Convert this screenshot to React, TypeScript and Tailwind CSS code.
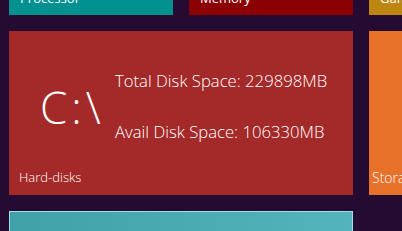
import React from "react";

export default function App() {
  const font = { fontFamily: '"Open Sans", "Noto Sans", sans-serif' };
  return (
    <div className="w-[402px] h-[231px] overflow-hidden bg-[#250a31] text-white" style={font}>
      <div className="grid grid-cols-[164px_164px_164px] grid-rows-[164px_164px_164px] gap-4 pl-[9px] -mt-[149px]">
        <div className="bg-[#009090] flex items-end px-[11px] pb-[10px] overflow-hidden">
          <span className="text-[13px] leading-none">Processor</span>
        </div>
        <div className="bg-[#8b0000] flex items-end px-[11px] pb-[10px] overflow-hidden">
          <span className="text-[13px] leading-none">Memory</span>
        </div>
        <div className="bg-[#bd8610] flex items-end px-[11px] pb-[10px] overflow-hidden">
          <span className="text-[13px] leading-none">Games</span>
        </div>

        <div className="col-span-2 bg-[#a42a2a] flex flex-col">
          <div className="flex-1 flex items-center pl-[31px] pt-[12px]">
            <div className="text-[44px] font-light leading-none tracking-[4px] w-[75px]">C:\</div>
            <div className="flex flex-col gap-[34px] text-[16.7px] leading-none font-light">
              <span>Total Disk Space: 229898MB</span>
              <span>Avail Disk Space: 106330MB</span>
            </div>
          </div>
          <div className="px-[10px] pb-[11px] text-[13px] leading-none font-light">Hard-disks</div>
        </div>
        <div className="bg-[#e8712a] flex flex-col justify-end px-[3px] pb-[10px] overflow-hidden">
          <span className="text-[14px] leading-none font-light whitespace-nowrap">Storage</span>
        </div>

        <div className="col-span-2 border border-[#a6dbe3] bg-gradient-to-r from-[#3fa2a8] to-[#52b5bd]"></div>
        <div className="bg-[#250a31]"></div>
      </div>
    </div>
  );
}
